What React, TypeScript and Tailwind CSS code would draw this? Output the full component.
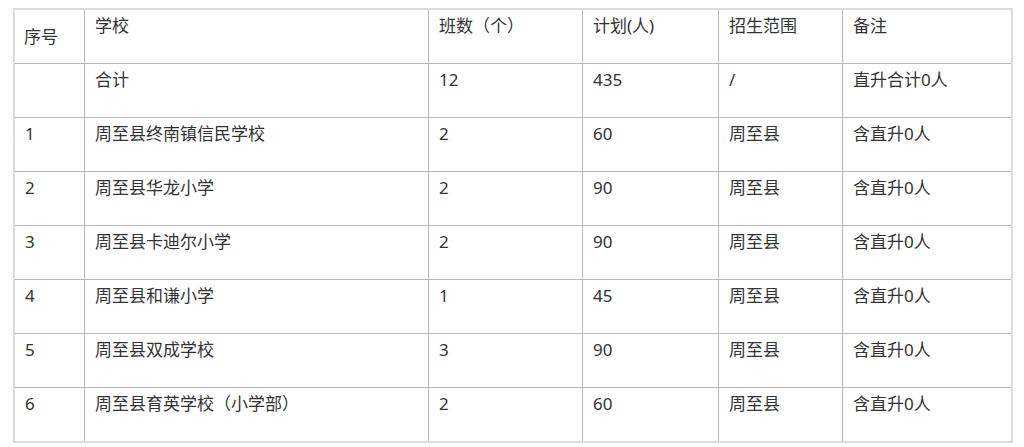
import React from "react";

const rows: string[][] = [
  ["", "合计", "12", "435", "/", "直升合计0人"],
  ["1", "周至县终南镇信民学校", "2", "60", "周至县", "含直升0人"],
  ["2", "周至县华龙小学", "2", "90", "周至县", "含直升0人"],
  ["3", "周至县卡迪尔小学", "2", "90", "周至县", "含直升0人"],
  ["4", "周至县和谦小学", "1", "45", "周至县", "含直升0人"],
  ["5", "周至县双成学校", "3", "90", "周至县", "含直升0人"],
  ["6", "周至县育英学校（小学部）", "2", "60", "周至县", "含直升0人"],
];

const header = ["序号", "学校", "班数（个）", "计划(人)", "招生范围", "备注"];

export default function App() {
  return (
    <div
      className="w-[1024px] h-[447px] bg-white pt-[8px] pl-[13px] text-[#333333] text-[17px] leading-6"
      style={{ fontFamily: '"Noto Sans", "Noto Sans CJK SC", sans-serif' }}
    >
      <div className="w-[1000px] border-2 border-[#dcdcdc] bg-[#b9b9b9] grid grid-cols-[69px_343px_153px_135px_123px_168px] auto-rows-[53px] gap-px">
        {header.map((h, i) => (
          <div
            key={i}
            className={
              i === 0
                ? "bg-white px-[9px] flex items-center"
                : "bg-white px-[10px] pt-[4px]"
            }
          >
            {h}
          </div>
        ))}
        {rows.map((r, ri) =>
          r.map((c, ci) => (
            <div key={`${ri}-${ci}`} className="bg-white px-[10px] pt-[4px]">
              {c}
            </div>
          ))
        )}
      </div>
    </div>
  );
}
